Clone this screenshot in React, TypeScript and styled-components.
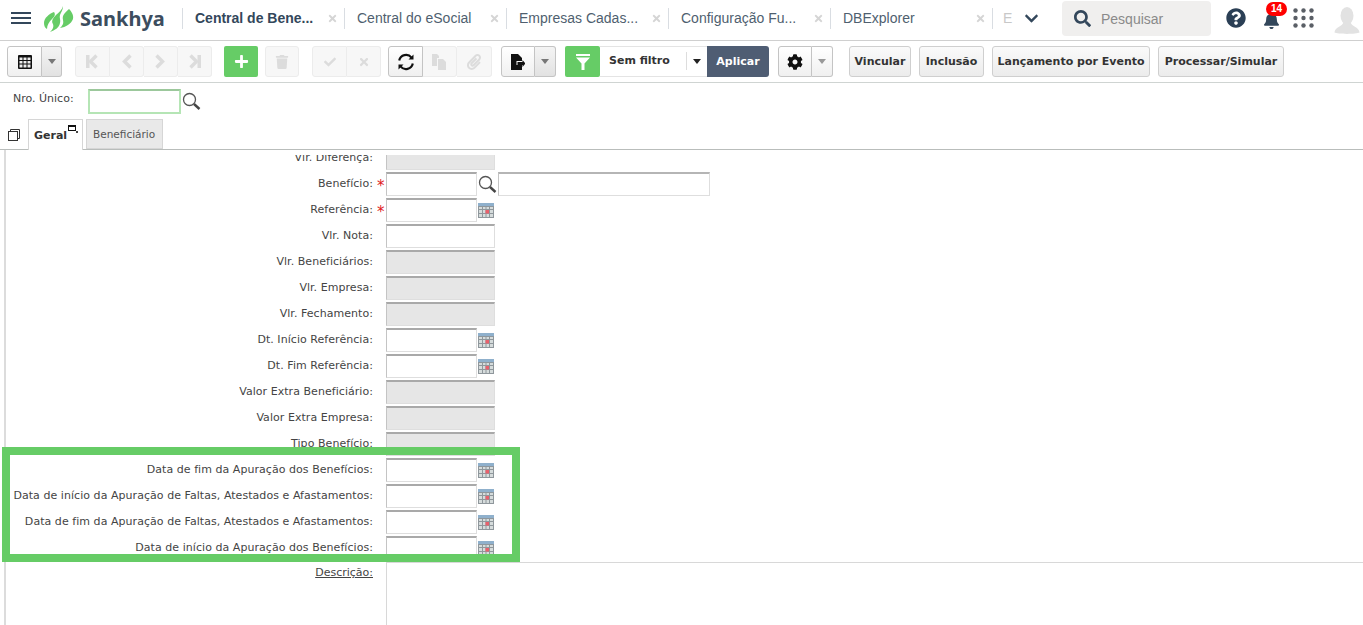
import React from "react";
import styled, { createGlobalStyle } from "styled-components";
import {
  FaBell,
  FaCheck,
  FaChevronDown,
  FaCog,
  FaPaperclip,
  FaPlus,
  FaQuestionCircle,
  FaSearch,
  FaTimes,
  FaTrash,
} from "react-icons/fa";

const GlobalStyle = createGlobalStyle`
  html, body {
    margin: 0;
    height: 625px;
    overflow: hidden;
    background: #fff;
  }
  * { box-sizing: border-box; }
`;

const tabs = [
  { title: "Central de Bene...", active: true },
  { title: "Central do eSocial" },
  { title: "Empresas Cadas..." },
  { title: "Configuração Fu..." },
  { title: "DBExplorer" },
];

type Field = {
  label: string;
  kind: "plain" | "disabled" | "date" | "search";
  required?: boolean;
};

const fields: Field[] = [
  { label: "Vlr. Diferença:", kind: "disabled" },
  { label: "Benefício:", kind: "search", required: true },
  { label: "Referência:", kind: "date", required: true },
  { label: "Vlr. Nota:", kind: "plain" },
  { label: "Vlr. Beneficiários:", kind: "disabled" },
  { label: "Vlr. Empresa:", kind: "disabled" },
  { label: "Vlr. Fechamento:", kind: "disabled" },
  { label: "Dt. Início Referência:", kind: "date" },
  { label: "Dt. Fim Referência:", kind: "date" },
  { label: "Valor Extra Beneficiário:", kind: "disabled" },
  { label: "Valor Extra Empresa:", kind: "disabled" },
  { label: "Tipo Benefício:", kind: "disabled" },
  { label: "Data de fim da Apuração dos Benefícios:", kind: "date" },
  { label: "Data de início da Apuração de Faltas, Atestados e Afastamentos:", kind: "date" },
  { label: "Data de fim da Apuração de Faltas, Atestados e Afastamentos:", kind: "date" },
  { label: "Data de início da Apuração dos Benefícios:", kind: "date" },
];

function MenuIcon() {
  return (
    <svg width="20" height="12" viewBox="0 0 20 12" fill="#33475b">
      <rect width="20" height="2" />
      <rect y="5" width="20" height="2" />
      <rect y="10" width="20" height="2" />
    </svg>
  );
}

function LogoMark() {
  return (
    <svg width="30" height="27" viewBox="0 0 30 27" fill="#66cc66">
      <path d="M10 7C5 9 0 13 0 18c0 3 1 5 3 6 0-4 2-7 5-10 2-2 4-4 2-7z" />
      <path d="M19 1c-1 4-4 6-7 9-3 3-5 6-3 9 1 3 0 5-3 8 5-2 9-4 10-9 1-3-1-5 0-8 1-3 3-5 3-9z" />
      <path d="M25 4c-2 2-5 4-6 7-1 3 1 5 0 8-1 2-2 3-3 4 6-1 11-4 13-9 1-4-2-8-4-10z" />
    </svg>
  );
}

function NavIcon({ dir }: { dir: "first" | "prev" | "next" | "last" }) {
  const flip = dir === "next" || dir === "last";
  const edge = dir === "first" || dir === "last";
  return (
    <svg width="15" height="15" viewBox="0 0 15 15" style={flip ? { transform: "scaleX(-1)" } : undefined}>
      {edge && <rect x="1" y="1" width="3.5" height="13" fill="#dcdcdc" />}
      <path d="M11.5 1.5 5.5 7.5l6 6" fill="none" stroke="#dcdcdc" strokeWidth="3.4" />
    </svg>
  );
}

function TableIcon() {
  return (
    <svg width="14" height="14" viewBox="0 0 14 14">
      <rect width="14" height="14" rx="1" fill="#111" />
      <path
        d="M1.500 2.500h3v2.500h-3zM5.500 2.500h3v2.500h-3zM9.500 2.500h3v2.500h-3zM1.500 6h3v2.500h-3zM5.500 6h3v2.500h-3zM9.500 6h3v2.500h-3zM1.500 9.500h3v3h-3zM5.500 9.500h3v3h-3zM9.500 9.500h3v3h-3z"
        fill="#eee"
      />
    </svg>
  );
}

function RefreshIcon() {
  return (
    <svg width="18" height="18" viewBox="0 0 18 18" fill="none" stroke="#111" strokeWidth="2.2">
      <path d="M2.200 7.500A7 7 0 0 1 14.500 4.600" />
      <path d="M15.800 10.500A7 7 0 0 1 3.500 13.400" />
      <path d="M16.500 1.500v5h-5z" fill="#111" stroke="none" />
      <path d="M1.500 16.500v-5h5z" fill="#111" stroke="none" />
    </svg>
  );
}

function CopyIcon() {
  return (
    <svg width="15" height="16" viewBox="0 0 15 16" fill="#dcdcdc">
      <path d="M0 0h5l2 2v2H5v8H0z" />
      <path d="M6 5h5l3 3v8H6z" />
    </svg>
  );
}

function DocIcon() {
  return (
    <svg width="14" height="16" viewBox="0 0 14 16">
      <path d="M0 0h7l4 4v3H5.500v4H11v5H0z" fill="#111" />
      <path d="M6.500 8h5V6l3 3.500-3 3.500v-2h-5z" fill="#111" />
    </svg>
  );
}

function FunnelIcon() {
  return (
    <svg width="14" height="16" viewBox="0 0 14 16" fill="#fff">
      <rect width="14" height="2" />
      <path d="M0 3.500h14L8.500 9.500V16h-3V9.500z" />
    </svg>
  );
}

function CaretIcon({ color }: { color: string }) {
  return (
    <svg width="8" height="5" viewBox="0 0 8 5">
      <path d="M0 0h8L4 5z" fill={color} />
    </svg>
  );
}

function LensIcon() {
  return (
    <svg width="19" height="19" viewBox="0 0 19 19" fill="none">
      <circle cx="7.500" cy="7.500" r="6" stroke="#555" strokeWidth="1.300" fill="#fff" />
      <path d="M12 12l5.500 5" stroke="#444" strokeWidth="2.400" />
    </svg>
  );
}

function CalendarIcon() {
  return (
    <svg width="16" height="15" viewBox="0 0 16 15">
      <rect width="16" height="15" fill="#8f979c" />
      <rect width="16" height="3" fill="#8fb0cc" />
      <path
        d="M1 4h3v2H1zM5 4h2.500v2H5zM8.500 4H11v2H8.500zM12 4h3v2h-3zM1 7h3v3H1zM5 7h2.500v3H5zM12 7h3v3h-3zM1 11h3v3H1zM5 11h2.500v3H5zM8.500 11H11v3H8.500zM12 11h3v3h-3z"
        fill="#d6dcdc"
      />
      <rect x="7.500" y="7" width="3.500" height="3.500" fill="#e8606c" />
    </svg>
  );
}

function RestoreIcon() {
  return (
    <svg width="12" height="12" viewBox="0 0 12 12" fill="none" stroke="#333">
      <rect x="0.500" y="2.500" width="9" height="9" fill="#fff" />
      <path d="M2.500 2.500v-2h9v9h-2" />
    </svg>
  );
}

function DotsIcon() {
  return (
    <svg width="21" height="20" viewBox="0 0 21 20" fill="#5a5f66">
      {[2.5, 10, 17.5].map((cy) =>
        [2.5, 10.5, 18.5].map((cx) => <circle key={`${cx}-${cy}`} cx={cx} cy={cy} r="2.200" />)
      )}
    </svg>
  );
}

function AvatarIcon() {
  return (
    <svg width="26" height="29" viewBox="0 0 28 30" fill="#e2e2e2">
      <ellipse cx="14" cy="10" rx="7" ry="9.500" />
      <path d="M10 17c0 4-9 5-9.500 11 3 2 24 2 27 0-.5-6-9.500-7-9.500-11z" />
    </svg>
  );
}

export default function App() {
  return (
    <Page>
      <GlobalStyle />

      <TopBar>
        <MenuButton>
          <MenuIcon />
        </MenuButton>
        <Logo>
          <LogoMark />
          <LogoText>Sankhya</LogoText>
        </Logo>
        <TabList>
          {tabs.map((tab) => (
            <AppTab key={tab.title}>
              <AppTabTitle $active={tab.active}>{tab.title}</AppTabTitle>
              <FaTimes size={11} color="#d5d5d5" />
            </AppTab>
          ))}
          <ClippedTab>E</ClippedTab>
        </TabList>
        <MoreTabs>
          <FaChevronDown size={15} />
        </MoreTabs>
        <SearchBox>
          <FaSearch size={17} color="#33475b" />
          <SearchText>Pesquisar</SearchText>
        </SearchBox>
        <HelpIcon>
          <FaQuestionCircle size={20} />
        </HelpIcon>
        <BellWrap>
          <FaBell size={17} />
          <Badge>14</Badge>
        </BellWrap>
        <Dots>
          <DotsIcon />
        </Dots>
        <Avatar>
          <AvatarIcon />
        </Avatar>
      </TopBar>

      <Toolbar>
        <Group>
          <ToolButton $w={35} $on><TableIcon /></ToolButton>
          <ToolButton $w={20} $on $shade><CaretIcon color="#777" /></ToolButton>
        </Group>
        <Group $gap={13}>
          <ToolButton $w={35}><NavIcon dir="first" /></ToolButton>
          <ToolButton $w={34}><NavIcon dir="prev" /></ToolButton>
          <ToolButton $w={34}><NavIcon dir="next" /></ToolButton>
          <ToolButton $w={34}><NavIcon dir="last" /></ToolButton>
        </Group>
        <GreenButton $gap={12} $w={34}><FaPlus size={15} color="#fff" /></GreenButton>
        <Group $gap={7}>
          <ToolButton $w={34}><FaTrash size={14} color="#dcdcdc" /></ToolButton>
        </Group>
        <Group $gap={13}>
          <ToolButton $w={35}><FaCheck size={12} color="#dcdcdc" /></ToolButton>
          <ToolButton $w={34}><FaTimes size={12} color="#dcdcdc" /></ToolButton>
        </Group>
        <Group $gap={7}>
          <ToolButton $w={35} $on><RefreshIcon /></ToolButton>
          <ToolButton $w={34}><CopyIcon /></ToolButton>
          <ToolButton $w={35}><FaPaperclip size={16} color="#dcdcdc" /></ToolButton>
        </Group>
        <Group $gap={9}>
          <ToolButton $w={34} $on><DocIcon /></ToolButton>
          <ToolButton $w={21} $on $shade><CaretIcon color="#777" /></ToolButton>
        </Group>
        <GreenButton $gap={9} $w={35}><FunnelIcon /></GreenButton>
        <FilterName>Sem filtro</FilterName>
        <FilterCaret><CaretIcon color="#222" /></FilterCaret>
        <ApplyButton>Aplicar</ApplyButton>
        <Group $gap={9}>
          <ToolButton $w={34} $on><FaCog size={16} color="#111" /></ToolButton>
          <ToolButton $w={21} $on><CaretIcon color="#999" /></ToolButton>
        </Group>
        <TextButton $gap={16} $w={62}>Vincular</TextButton>
        <TextButton $gap={8} $w={65}>Inclusão</TextButton>
        <TextButton $gap={8} $w={158}>Lançamento por Evento</TextButton>
        <TextButton $gap={8} $w={126}>Processar/Simular</TextButton>
      </Toolbar>

      <FilterRow>
        <FilterLabel>Nro. Único:</FilterLabel>
        <FocusedInput />
        <LensIcon />
      </FilterRow>

      <TabStrip>
        <RestoreSlot>
          <RestoreIcon />
        </RestoreSlot>
        <FormTab $active>
          Geral
          <TabCorner />
        </FormTab>
        <FormTab>Beneficiário</FormTab>
      </TabStrip>

      <Panel>
        <Clip>
          <ScrollInner>
            {fields.map((field) => (
              <Row key={field.label}>
                <Label>{field.label}</Label>
                <Required>{field.required ? "*" : ""}</Required>
                <Input $kind={field.kind} />
                {field.kind === "date" && (
                  <IconSlot>
                    <CalendarIcon />
                  </IconSlot>
                )}
                {field.kind === "search" && (
                  <>
                    <IconSlot>
                      <LensIcon />
                    </IconSlot>
                    <WideInput />
                  </>
                )}
              </Row>
            ))}
            <MemoRow>
              <MemoLabel>Descrição:</MemoLabel>
              <Memo />
            </MemoRow>
          </ScrollInner>
        </Clip>
      </Panel>

      <Highlight />
    </Page>
  );
}

const Page = styled.div`
  position: relative;
  width: 1363px;
  height: 625px;
  overflow: hidden;
  background: #fff;
  font-family: "DejaVu Sans", Verdana, sans-serif;
  font-size: 11px;
  color: #444;
`;

const TopBar = styled.div`
  display: flex;
  align-items: center;
  height: 41px;
  padding-bottom: 4px;
  border-bottom: 1px solid #cfcfcf;
  font-family: "Liberation Sans", Arial, sans-serif;
  color: #33475b;
`;

const MenuButton = styled.div`
  display: flex;
  width: 44px;
  padding-left: 11px;
`;

const Logo = styled.div`
  display: flex;
  align-items: center;
  gap: 6px;
  width: 138px;
`;

const LogoText = styled.span`
  font-family: "Noto Sans", sans-serif;
  font-weight: 700;
  font-size: 20px;
  color: #3c4d5e;
`;

const TabList = styled.div`
  display: flex;
  width: 837px;
  overflow: hidden;
`;

const AppTab = styled.div`
  flex: 0 0 162px;
  height: 21px;
  display: flex;
  align-items: center;
  justify-content: space-between;
  padding: 0 6px 0 12px;
  border-left: 1px solid #d9dde2;
`;

const AppTabTitle = styled.span<{ $active?: boolean }>`
  font-size: 14px;
  font-weight: ${(p) => (p.$active ? 700 : 400)};
  color: ${(p) => (p.$active ? "#33475b" : "#4f5f6f")};
`;

const ClippedTab = styled.div`
  flex: 1;
  height: 21px;
  line-height: 21px;
  padding-left: 10px;
  border-left: 1px solid #d9dde2;
  font-size: 14px;
  color: #c8c8c8;
`;

const MoreTabs = styled.div`
  display: flex;
  width: 38px;
  margin-left: 5px;
  color: #33475b;
`;

const SearchBox = styled.div`
  display: flex;
  align-items: center;
  gap: 10px;
  width: 149px;
  height: 35px;
  margin-top: 1px;
  padding-left: 12px;
  border-radius: 4px;
  background: #f0efee;
`;

const SearchText = styled.span`
  font-size: 14px;
  color: #8a8a8a;
`;

const HelpIcon = styled.div`
  display: flex;
  margin-left: 15px;
  color: #2b3f55;
`;

const BellWrap = styled.div`
  position: relative;
  display: flex;
  margin: 4px 0 0 17px;
  color: #33475b;
`;

const Badge = styled.span`
  position: absolute;
  left: 3px;
  top: -10px;
  width: 21px;
  height: 14px;
  border-radius: 7px;
  background: #ff0000;
  color: #fff;
  font-size: 10px;
  font-weight: 700;
  line-height: 14px;
  text-align: center;
`;

const Dots = styled.div`
  display: flex;
  margin-left: 13px;
`;

const Avatar = styled.div`
  display: flex;
  margin: 4px 0 0 20px;
`;

const Toolbar = styled.div`
  display: flex;
  align-items: center;
  height: 42px;
  padding-left: 7px;
  border-bottom: 1px solid #cfd4d2;
`;

const Group = styled.div<{ $gap?: number }>`
  display: flex;
  height: 31px;
  margin-left: ${(p) => p.$gap ?? 0}px;
`;

const ToolButton = styled.div<{ $w: number; $on?: boolean; $shade?: boolean }>`
  display: flex;
  align-items: center;
  justify-content: center;
  width: ${(p) => p.$w}px;
  border: 1px solid ${(p) => (p.$on ? "#c4c4c4" : "#ececec")};
  border-left: none;
  border-radius: 0 3px 3px 0;
  background: ${(p) =>
    p.$shade ? "linear-gradient(#f4f4f4, #e2e2e2)" : p.$on ? "linear-gradient(#fff, #f0f0f0)" : "#f7f7f7"};
  &:first-child {
    border-left: 1px solid ${(p) => (p.$on ? "#c4c4c4" : "#ececec")};
    border-radius: 3px 0 0 3px;
  }
  &:only-child {
    border-radius: 3px;
  }
`;

const GreenButton = styled.div<{ $gap: number; $w: number }>`
  display: flex;
  align-items: center;
  justify-content: center;
  width: ${(p) => p.$w}px;
  height: 31px;
  margin-left: ${(p) => p.$gap}px;
  border-radius: 2px;
  background: #66cc66;
`;

const FilterName = styled.div`
  display: flex;
  align-items: center;
  width: 86px;
  height: 31px;
  padding: 0 0 3px 9px;
  border-top: 1px solid #e4e4e4;
  border-bottom: 1px solid #e4e4e4;
  font-weight: 700;
  color: #333;
`;

const FilterCaret = styled.div`
  position: relative;
  display: flex;
  align-items: center;
  justify-content: center;
  width: 21px;
  height: 31px;
  border: 1px solid #e4e4e4;
  border-width: 1px 0;
  &::before {
    content: "";
    position: absolute;
    left: 0;
    top: 5px;
    height: 18px;
    border-left: 1px solid #ddd;
  }
`;

const ApplyButton = styled.div`
  display: flex;
  align-items: center;
  justify-content: center;
  width: 62px;
  height: 31px;
  border-radius: 0 3px 3px 0;
  background: #4f5d73;
  color: #fff;
  font-weight: 700;
`;

const TextButton = styled.div<{ $gap: number; $w: number }>`
  display: flex;
  align-items: center;
  justify-content: center;
  width: ${(p) => p.$w}px;
  height: 31px;
  margin-left: ${(p) => p.$gap}px;
  border: 1px solid #cfcfcf;
  border-radius: 3px;
  background: linear-gradient(#fafafa, #ececec);
  font-weight: 700;
  white-space: nowrap;
  color: #333;
`;

const FilterRow = styled.div`
  display: flex;
  align-items: center;
  height: 36px;
  padding-left: 13px;
`;

const FilterLabel = styled.span`
  width: 75px;
  margin-bottom: 6px;
`;

const FocusedInput = styled.div`
  width: 93px;
  height: 25px;
  margin-right: 1px;
  border: 2px solid #b5e5b5;
  border-top-color: #9cc89c;
  background: #fff;
`;

const TabStrip = styled.div`
  display: flex;
  align-items: flex-end;
  height: 31px;
  border-bottom: 1px solid #b9bdbb;
`;

const RestoreSlot = styled.div`
  display: flex;
  width: 28px;
  padding: 0 0 8px 8px;
`;

const FormTab = styled.div<{ $active?: boolean }>`
  position: relative;
  display: flex;
  align-items: center;
  width: ${(p) => (p.$active ? 55 : 77)}px;
  height: ${(p) => (p.$active ? 31 : 30)}px;
  margin-right: ${(p) => (p.$active ? 3 : 0)}px;
  margin-bottom: ${(p) => (p.$active ? -1 : 0)}px;
  padding: 0 ${(p) => (p.$active ? 5 : 6)}px;
  border: 1px solid #d6d6d6;
  border-bottom: ${(p) => (p.$active ? "none" : "1px solid #d6d6d6")};
  background: ${(p) => (p.$active ? "#fff" : "#e9e9e9")};
  font-weight: ${(p) => (p.$active ? 700 : 400)};
  font-size: ${(p) => (p.$active ? 11 : 10.5)}px;
  color: ${(p) => (p.$active ? "#333" : "#555")};
`;

const TabCorner = styled.span`
  position: absolute;
  right: 6px;
  top: 5px;
  width: 8px;
  height: 6px;
  border: 1px solid #111;
  border-top-width: 2px;
  background: #fff;
  &::after {
    content: "";
    position: absolute;
    left: 7px;
    top: 4px;
    width: 2px;
    height: 2px;
    background: #444;
  }
`;

const Panel = styled.div`
  height: 475px;
  margin-left: 4px;
  padding-top: 5px;
  border-left: 2px solid #dcdcdc;
`;

const Clip = styled.div`
  height: 470px;
  overflow: hidden;
`;

const ScrollInner = styled.div`
  margin-top: -9px;
`;

const Row = styled.div`
  display: flex;
  align-items: center;
  height: 24px;
  margin-bottom: 2px;
`;

const Label = styled.div`
  width: 367px;
  text-align: right;
  white-space: nowrap;
  letter-spacing: 0.05px;
  margin-top: -1px;
`;

const Required = styled.span`
  width: 13px;
  padding: 4px 0 0 4px;
  color: #e02020;
  font-size: 15px;
  line-height: 15px;
`;

const Input = styled.div<{ $kind: Field["kind"] }>`
  width: ${(p) => (p.$kind === "date" || p.$kind === "search" ? 91 : 109)}px;
  height: 24px;
  border: 1px solid #dedede;
  border-top: 2px solid #a9a9a9;
  border-left-color: #c4c4c4;
  background: ${(p) => (p.$kind === "disabled" ? "#e6e6e6" : "#fff")};
`;

const IconSlot = styled.span`
  display: flex;
  margin-left: 1px;
`;

const WideInput = styled.div`
  width: 212px;
  height: 24px;
  margin-left: 1px;
  border: 1px solid #dedede;
  border-top: 2px solid #b5b5b5;
  border-left-color: #c4c4c4;
`;

const MemoRow = styled.div`
  display: flex;
  align-items: flex-start;
`;

const MemoLabel = styled.div`
  width: 367px;
  padding-top: 4px;
  text-align: right;
  text-decoration: underline;
`;

const Memo = styled.div`
  flex: 1;
  height: 100px;
  margin-left: 13px;
  border-top: 1px solid #d8d8d8;
  border-left: 1px solid #d8d8d8;
`;

const Highlight = styled.div`
  position: absolute;
  left: 2px;
  top: 447px;
  width: 518px;
  height: 115px;
  border: 8px solid #66cc66;
  pointer-events: none;
`;
